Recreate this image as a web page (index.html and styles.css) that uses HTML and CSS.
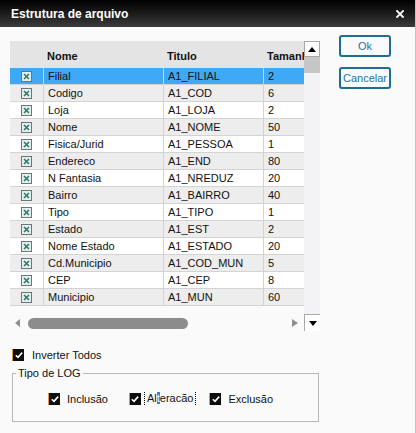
FILE: index.html
```html
<!DOCTYPE html>
<html lang="pt">
<head>
<meta charset="utf-8">
<title>Estrutura de arquivo</title>
<link rel="stylesheet" href="styles.css">
</head>
<body>
<div class="window">
  <header class="titlebar">
    <span class="title">Estrutura de arquivo</span>
    <span class="close">
      <svg width="8" height="8" viewBox="0 0 8 8"><path d="M1 1l6 6M7 1l-6 6" stroke="#fff" stroke-width="1.8" stroke-linecap="square"/></svg>
    </span>
  </header>
  <div class="body">
    <div class="main">
      <div class="grid">
        <div class="grid-area">
          <div class="viewport">
            <div class="row head">
              <div class="cell"></div>
              <div class="cell">Nome</div>
              <div class="cell">Titulo</div>
              <div class="cell">Tamanho</div>
            </div>
            <div class="row sel"><div class="cell icon"><svg class="xbox" width="11" height="11" viewBox="0 0 11 11"><rect x=".5" y=".5" width="10" height="10" fill="#e6efee" stroke="#687676"/><path d="M3 3l5 5M8 3l-5 5" stroke="#2b7a6c" stroke-width="1.6"/></svg></div><div class="cell">Filial</div><div class="cell">A1_FILIAL</div><div class="cell">2</div></div>
            <div class="row alt"><div class="cell icon"><svg class="xbox" width="11" height="11" viewBox="0 0 11 11"><rect x=".5" y=".5" width="10" height="10" fill="#e6efee" stroke="#687676"/><path d="M3 3l5 5M8 3l-5 5" stroke="#2b7a6c" stroke-width="1.6"/></svg></div><div class="cell">Codigo</div><div class="cell">A1_COD</div><div class="cell">6</div></div>
            <div class="row"><div class="cell icon"><svg class="xbox" width="11" height="11" viewBox="0 0 11 11"><rect x=".5" y=".5" width="10" height="10" fill="#e6efee" stroke="#687676"/><path d="M3 3l5 5M8 3l-5 5" stroke="#2b7a6c" stroke-width="1.6"/></svg></div><div class="cell">Loja</div><div class="cell">A1_LOJA</div><div class="cell">2</div></div>
            <div class="row alt"><div class="cell icon"><svg class="xbox" width="11" height="11" viewBox="0 0 11 11"><rect x=".5" y=".5" width="10" height="10" fill="#e6efee" stroke="#687676"/><path d="M3 3l5 5M8 3l-5 5" stroke="#2b7a6c" stroke-width="1.6"/></svg></div><div class="cell">Nome</div><div class="cell">A1_NOME</div><div class="cell">50</div></div>
            <div class="row"><div class="cell icon"><svg class="xbox" width="11" height="11" viewBox="0 0 11 11"><rect x=".5" y=".5" width="10" height="10" fill="#e6efee" stroke="#687676"/><path d="M3 3l5 5M8 3l-5 5" stroke="#2b7a6c" stroke-width="1.6"/></svg></div><div class="cell">Fisica/Jurid</div><div class="cell">A1_PESSOA</div><div class="cell">1</div></div>
            <div class="row alt"><div class="cell icon"><svg class="xbox" width="11" height="11" viewBox="0 0 11 11"><rect x=".5" y=".5" width="10" height="10" fill="#e6efee" stroke="#687676"/><path d="M3 3l5 5M8 3l-5 5" stroke="#2b7a6c" stroke-width="1.6"/></svg></div><div class="cell">Endereco</div><div class="cell">A1_END</div><div class="cell">80</div></div>
            <div class="row"><div class="cell icon"><svg class="xbox" width="11" height="11" viewBox="0 0 11 11"><rect x=".5" y=".5" width="10" height="10" fill="#e6efee" stroke="#687676"/><path d="M3 3l5 5M8 3l-5 5" stroke="#2b7a6c" stroke-width="1.6"/></svg></div><div class="cell">N Fantasia</div><div class="cell">A1_NREDUZ</div><div class="cell">20</div></div>
            <div class="row alt"><div class="cell icon"><svg class="xbox" width="11" height="11" viewBox="0 0 11 11"><rect x=".5" y=".5" width="10" height="10" fill="#e6efee" stroke="#687676"/><path d="M3 3l5 5M8 3l-5 5" stroke="#2b7a6c" stroke-width="1.6"/></svg></div><div class="cell">Bairro</div><div class="cell">A1_BAIRRO</div><div class="cell">40</div></div>
            <div class="row"><div class="cell icon"><svg class="xbox" width="11" height="11" viewBox="0 0 11 11"><rect x=".5" y=".5" width="10" height="10" fill="#e6efee" stroke="#687676"/><path d="M3 3l5 5M8 3l-5 5" stroke="#2b7a6c" stroke-width="1.6"/></svg></div><div class="cell">Tipo</div><div class="cell">A1_TIPO</div><div class="cell">1</div></div>
            <div class="row alt"><div class="cell icon"><svg class="xbox" width="11" height="11" viewBox="0 0 11 11"><rect x=".5" y=".5" width="10" height="10" fill="#e6efee" stroke="#687676"/><path d="M3 3l5 5M8 3l-5 5" stroke="#2b7a6c" stroke-width="1.6"/></svg></div><div class="cell">Estado</div><div class="cell">A1_EST</div><div class="cell">2</div></div>
            <div class="row"><div class="cell icon"><svg class="xbox" width="11" height="11" viewBox="0 0 11 11"><rect x=".5" y=".5" width="10" height="10" fill="#e6efee" stroke="#687676"/><path d="M3 3l5 5M8 3l-5 5" stroke="#2b7a6c" stroke-width="1.6"/></svg></div><div class="cell">Nome Estado</div><div class="cell">A1_ESTADO</div><div class="cell">20</div></div>
            <div class="row alt"><div class="cell icon"><svg class="xbox" width="11" height="11" viewBox="0 0 11 11"><rect x=".5" y=".5" width="10" height="10" fill="#e6efee" stroke="#687676"/><path d="M3 3l5 5M8 3l-5 5" stroke="#2b7a6c" stroke-width="1.6"/></svg></div><div class="cell">Cd.Municipio</div><div class="cell">A1_COD_MUN</div><div class="cell">5</div></div>
            <div class="row"><div class="cell icon"><svg class="xbox" width="11" height="11" viewBox="0 0 11 11"><rect x=".5" y=".5" width="10" height="10" fill="#e6efee" stroke="#687676"/><path d="M3 3l5 5M8 3l-5 5" stroke="#2b7a6c" stroke-width="1.6"/></svg></div><div class="cell">CEP</div><div class="cell">A1_CEP</div><div class="cell">8</div></div>
            <div class="row alt"><div class="cell icon"><svg class="xbox" width="11" height="11" viewBox="0 0 11 11"><rect x=".5" y=".5" width="10" height="10" fill="#e6efee" stroke="#687676"/><path d="M3 3l5 5M8 3l-5 5" stroke="#2b7a6c" stroke-width="1.6"/></svg></div><div class="cell">Municipio</div><div class="cell">A1_MUN</div><div class="cell">60</div></div>
          </div>
          <div class="hscroll">
            <span class="arrow-left"></span>
            <span class="hthumb"></span>
            <span class="arrow-right"></span>
          </div>
        </div>
        <div class="vscroll">
          <div class="vbtn up"><span class="tri-up"></span></div>
          <div class="vthumb"></div>
          <div class="vtrack"></div>
          <div class="vbtn down"><span class="tri-down"></span></div>
        </div>
      </div>

      <label class="chk inverter"><span class="box"><svg width="10" height="10" viewBox="0 0 10 10"><path d="M1.8 5.2l2.2 2.2 4.2-4.8" fill="none" stroke="#fff" stroke-width="1.6"/></svg></span><span>Inverter Todos</span></label>

      <fieldset class="group">
        <legend>Tipo de LOG</legend>
        <div class="opts">
          <label class="chk"><span class="box"><svg width="10" height="10" viewBox="0 0 10 10"><path d="M1.8 5.2l2.2 2.2 4.2-4.8" fill="none" stroke="#fff" stroke-width="1.6"/></svg></span><span>Inclusão</span></label>
          <label class="chk opt-focus"><span class="box"><svg width="10" height="10" viewBox="0 0 10 10"><path d="M1.8 5.2l2.2 2.2 4.2-4.8" fill="none" stroke="#fff" stroke-width="1.6"/></svg></span><span class="focus">Al<span class="caret">t</span>eracão</span></label>
          <label class="chk"><span class="box"><svg width="10" height="10" viewBox="0 0 10 10"><path d="M1.8 5.2l2.2 2.2 4.2-4.8" fill="none" stroke="#fff" stroke-width="1.6"/></svg></span><span>Exclusão</span></label>
        </div>
      </fieldset>
    </div>
    <div class="actions">
      <button class="btn">Ok</button>
      <button class="btn">Cancelar</button>
    </div>
  </div>
</div>
</body>
</html>
```

FILE: styles.css
```css
* { box-sizing: border-box; }
html, body { margin: 0; padding: 0; }
body {
  font-family: "Liberation Sans", Arial, sans-serif;
  font-size: 11px;
  color: #111;
  background: #fafafa;
}
.window {
  width: 416px;
  height: 433px;
  background: #fafafa;
  border-right: 1px solid #c4c4c4;
  overflow: hidden;
}
.titlebar {
  height: 27px;
  background: linear-gradient(to bottom, #000 0%, #1c1c1c 50%, #3b3b3b 100%);
  display: flex;
  align-items: center;
  padding-left: 11px;
  padding-right: 11px;
}
.title {
  color: #fff;
  font-weight: bold;
  font-size: 12px;
  flex: 1;
}
.close { display: flex; align-items: center; }

.body { display: flex; padding-left: 10px; }
.main { width: 310px; padding-top: 14px; }

.grid { display: flex; height: 290px; }
.grid-area { width: 294px; display: flex; flex-direction: column; }
.viewport { height: 265px; overflow: hidden; background: #fdfdfd; }

.row {
  display: grid;
  grid-template-columns: 34px 120px 100px 70px;
  width: 324px;
  height: 17px;
  background: #fff;
  border-bottom: 1px solid #d3d3d3;
}
.row.alt { background: #ededed; }
.row.sel { background: #3fa9f5; }
.cell {
  padding-left: 4px;
  border-right: 1px solid #d3d3d3;
  white-space: nowrap;
  overflow: hidden;
  line-height: 16px;
}
.cell.icon { display: flex; align-items: center; justify-content: center; padding-left: 0; }
.row.head {
  height: 27px;
  background: #e4e4e4;
  border-bottom: none;
  font-weight: bold;
}
.row.head .cell { border-right: none; line-height: 27px; padding-top: 2px; padding-left: 3px; }

.hscroll {
  flex: 1;
  display: flex;
  align-items: center;
  padding-top: 9px;
  background: #fafafa;
}
.arrow-left {
  margin-left: 5px;
  width: 0; height: 0;
  border-top: 4px solid transparent;
  border-bottom: 4px solid transparent;
  border-right: 5px solid #8e8e8e;
}
.hthumb {
  margin-left: 8px;
  width: 160px;
  height: 11px;
  border-radius: 6px;
  background: #8c8c8c;
}
.arrow-right {
  margin-left: auto;
  margin-right: 6px;
  width: 0; height: 0;
  border-top: 4px solid transparent;
  border-bottom: 4px solid transparent;
  border-left: 6px solid #8e8e8e;
}

.vscroll { width: 16px; display: flex; flex-direction: column; background: #f3f3f6; }
.vbtn {
  height: 16px;
  background: #fff;
  border: 1px solid #a8a8a8;
  display: flex;
  align-items: center;
  justify-content: center;
}
.vbtn.up { height: 16px; }
.vbtn.down { height: 17px; border-right: none; border-bottom: none; }
.tri-up {
  width: 0; height: 0;
  border-left: 4px solid transparent;
  border-right: 4px solid transparent;
  border-bottom: 5px solid #000;
}
.tri-down {
  width: 0; height: 0;
  border-left: 4px solid transparent;
  border-right: 4px solid transparent;
  border-top: 5px solid #000;
}
.vthumb { height: 16px; background: #c6c6c6; }
.vtrack { flex: 1; }

.chk { display: flex; align-items: center; height: 13px; }
.box {
  width: 12px;
  height: 12px;
  background: #0d0d0d;
  border-left: 1px solid #e09530;
  display: flex;
  align-items: center;
  justify-content: center;
  margin-right: 7px;
}
.inverter { margin-top: 17px; margin-left: 2px; }
.inverter .box { margin-right: 8px; }

.group {
  margin: 6px 0 0 2px;
  width: 307px;
  border: 1px solid #b8b8b8;
  padding: 0 0 16px 3px;
}
.group legend { padding: 0 2px; line-height: 13px; }
.opts {
  display: flex;
  align-items: center;
  padding-left: 32px;
  margin-top: 12px;
  gap: 13px;
}
.opt-focus { margin-left: 8px; }
.opt-focus .box { margin-right: 3px; }
.focus {
  border-left: 1px dotted #000;
  border-right: 1px dotted #000;
  padding: 0 2px;
  line-height: 13px;
}
.caret { background: #2f80e6; color: #fff; }

.actions {
  margin-left: 19px;
  padding-top: 8px;
  display: flex;
  flex-direction: column;
  gap: 10px;
}
.btn {
  width: 52px;
  height: 22px;
  border: 2px solid #1f6c99;
  border-radius: 3px;
  background: #fafafa;
  color: #2474a8;
  font-family: "Liberation Sans", Arial, sans-serif;
  font-size: 11px;
  padding: 0;
}
```
